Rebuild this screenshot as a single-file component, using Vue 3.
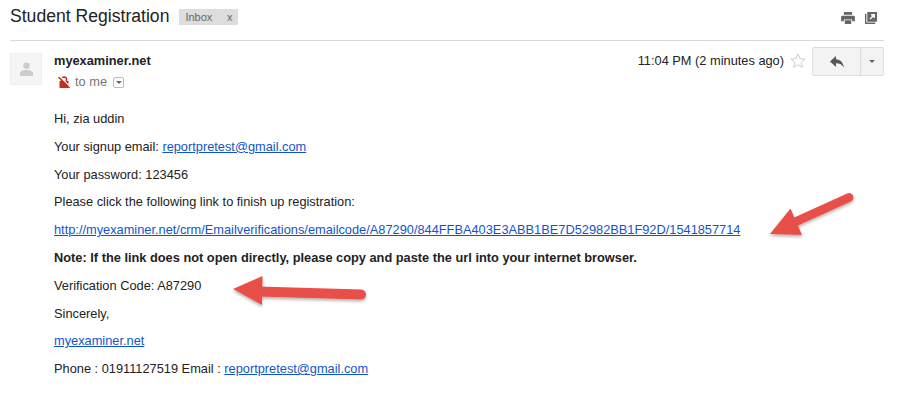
<template>
  <div class="mail">
    <header class="subject-bar">
      <h1>Student Registration</h1>
      <span class="label">Inbox <i>x</i></span>
      <div class="top-icons">
        <svg width="14" height="12" viewBox="0 0 15 13">
          <path fill="#666" d="M3 0h9v3H3zM1.500 4h12A1.500 1.500 0 0 1 15 5.500V10h-3V8H3v2H0V5.500A1.500 1.500 0 0 1 1.500 4zM4 9h7v4H4z" />
        </svg>
        <svg width="12" height="12" viewBox="0 0 13 13">
          <path fill="#666" d="M0 2h1.500v9.500H11V13H0zM2.500 0H13v10.500H2.500z" />
          <path fill="none" stroke="#fff" stroke-width="1.500" d="M5.500 7.500 10 3M6.500 3H10v3.500" />
        </svg>
      </div>
    </header>

    <section class="meta">
      <div class="avatar">
        <svg width="13" height="14" viewBox="0 0 14 15">
          <circle cx="7" cy="4" r="3.500" fill="#ccc" />
          <path fill="#ccc" d="M0 15v-3c0-2 3-3.500 7-3.500s7 1.500 7 3.500v3z" />
        </svg>
      </div>
      <div class="sender">
        <strong>myexaminer.net</strong>
        <div class="to">
          <!-- crossed out padlock -->
          <svg width="12" height="12" viewBox="0 0 12 12">
            <path fill="none" stroke="#c5301f" stroke-width="1.500" d="M3.500 6V3.500a2.500 2.500 0 0 1 5 0V6" />
            <path fill="#c5301f" d="M1.500 5h9v7h-9z" />
            <path stroke="#fff" stroke-width="1.200" d="M1.500 0 12 10.500" />
            <path stroke="#c5301f" stroke-width="1.500" d="M.5 1 11.500 12" />
          </svg>
          <span>to me</span>
          <span class="caret-box"><b></b></span>
        </div>
      </div>
      <div class="when">
        <span>11:04 PM (2 minutes ago)</span>
        <svg class="star" width="16" height="15" viewBox="0 0 16 15">
          <path fill="none" stroke="#ccc" d="M8 1l2 4.700 5 .4-3.800 3.300 1.200 4.900L8 11.700 3.600 14.300l1.200-4.900L1 6.100l5-.4z" />
        </svg>
        <div class="reply-group">
          <button class="reply">
            <svg width="14" height="12" viewBox="0 0 14 12">
              <path fill="#555" d="M6 0v3.200c4.500.3 7 3.200 8 8.300-1.800-3-4.200-4.200-8-4.300V11L0 5.500z" />
            </svg>
          </button>
          <button class="more"><b></b></button>
        </div>
      </div>
    </section>

    <article class="body">
      <p>Hi, zia uddin</p>
      <p>Your signup email: <a>reportpretest@gmail.com</a></p>
      <p>Your password: 123456</p>
      <p>Please click the following link to finish up registration:</p>
      <p><a>http://myexaminer.net/crm/Emailverifications/emailcode/A87290/844FFBA403E3ABB1BE7D52982BB1F92D/1541857714</a></p>
      <p><strong>Note: If the link does not open directly, please copy and paste the url into your internet browser.</strong></p>
      <p>Verification Code: A87290</p>
      <p>Sincerely,</p>
      <p><a>myexaminer.net</a></p>
      <p>Phone : 01911127519 Email : <a>reportpretest@gmail.com</a></p>
    </article>

    <!-- red annotation arrows drawn on top of the mail -->
    <svg class="arrows" width="916" height="404" viewBox="0 0 916 404">
      <defs>
        <filter id="soft" x="-20%" y="-20%" width="140%" height="150%">
          <feDropShadow dx="0" dy="2" stdDeviation="1.500" flood-color="#000" flood-opacity="0.3" />
        </filter>
      </defs>
      <g filter="url(#soft)" fill="#e9504a">
        <path d="M849 197.500 795 222" stroke="#e9504a" stroke-width="9" stroke-linecap="round" />
        <path d="M770 234 790.500 208.500 802 235z" />
        <path d="M361 294.500 258 291.500" stroke="#e9504a" stroke-width="10" stroke-linecap="round" />
        <path d="M233 289 262.500 276 262 305z" />
      </g>
    </svg>
  </div>
</template>

<script setup>
</script>

<style>
html,
body {
  margin: 0;
  background: #fff;
}
</style>

<style scoped>
.mail {
  position: relative;
  width: 916px;
  height: 404px;
  overflow: hidden;
  font-family: "Liberation Sans", Arial, sans-serif;
  font-size: 12.8px;
  color: #222;
}
.subject-bar {
  display: flex;
  align-items: center;
  width: 874px;
  height: 33px;
  margin-left: 10px;
  padding-bottom: 7px;
  border-bottom: 1px solid #d8d8d8;
}
h1 {
  margin: 0;
  font-size: 17.6px;
  font-weight: 400;
  color: #222;
}
.label {
  display: flex;
  justify-content: space-between;
  width: 59px;
  height: 16px;
  margin-top: 1px;
  margin-left: 10px;
  padding: 0 6px;
  box-sizing: border-box;
  background: #ddd;
  color: #666;
  font-size: 11px;
  line-height: 17px;
}
.label i {
  font-style: normal;
}
.top-icons {
  display: flex;
  align-items: center;
  gap: 10px;
  margin-top: 3px;
  margin-left: auto;
  margin-right: 7px;
}
.meta {
  display: flex;
  height: 35px;
  margin-top: 12px;
  margin-left: 10px;
  width: 874px;
}
.avatar {
  display: flex;
  align-items: center;
  justify-content: center;
  width: 30px;
  height: 30px;
  border: 1px solid #eee;
  background: #f5f5f5;
  box-sizing: content-box;
}
.sender {
  margin-left: 12px;
  line-height: 16px;
}
.to {
  display: flex;
  align-items: center;
  margin: 5px 0 0 4px;
  color: #777;
}
.to span:first-of-type {
  margin-left: 5px;
}
.caret-box {
  display: flex;
  align-items: center;
  justify-content: center;
  width: 9px;
  height: 9px;
  margin-left: 6px;
  border: 1px solid #bbb;
  border-radius: 2px;
}
.caret-box b,
.more b {
  width: 0;
  height: 0;
  border-left: 3px solid transparent;
  border-right: 3px solid transparent;
  border-top: 3px solid #666;
}
.when {
  display: flex;
  align-items: flex-start;
  margin-left: auto;
  line-height: 16px;
}
.star {
  margin: 0 6px 0 6px;
}
.reply-group {
  display: flex;
  height: 29px;
  margin-top: -6px;
  border: 1px solid #dcdcdc;
  border-radius: 2px;
  background: #f3f3f3;
  box-sizing: border-box;
}
.reply-group button {
  display: flex;
  align-items: center;
  justify-content: center;
  padding: 0;
  border: 0;
  background: none;
}
.reply {
  width: 48px;
  border-right: 1px solid #dcdcdc !important;
}
.more {
  width: 22px;
}
.body {
  margin: 17px 0 0 54px;
}
.body p {
  margin: 0;
  height: 27.8px;
  line-height: 27.8px;
  white-space: nowrap;
}
.body a {
  color: #15c;
  text-decoration: underline;
}
.arrows {
  position: absolute;
  left: 0;
  top: 0;
  pointer-events: none;
}
</style>
